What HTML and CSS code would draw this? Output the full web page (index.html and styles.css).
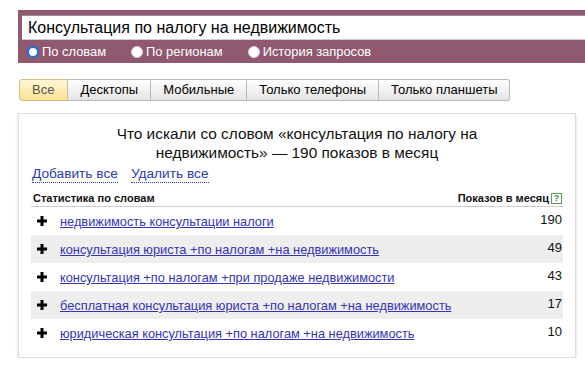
FILE: index.html
```html
<!DOCTYPE html>
<html lang="ru">
<head>
<meta charset="utf-8">
<link rel="stylesheet" href="styles.css">
</head>
<body>
<div class="search">
  <div class="input">Консультация по налогу на недвижимость</div>
  <div class="radios">
    <span class="radio"><span class="circle checked"></span>По словам</span>
    <span class="radio"><span class="circle"></span>По регионам</span>
    <span class="radio"><span class="circle"></span>История запросов</span>
  </div>
</div>
<div class="tabs">
  <span class="tab active">Все</span>
  <span class="tab">Десктопы</span>
  <span class="tab">Мобильные</span>
  <span class="tab">Только телефоны</span>
  <span class="tab">Только планшеты</span>
</div>
<div class="card">
  <div class="title">Что искали со словом «консультация по налогу на<br>недвижимость» — 190 показов в месяц</div>
  <div class="actions"><a class="dlink">Добавить все</a><a class="dlink">Удалить все</a></div>
  <div class="list">
    <div class="head">
      <span>Статистика по словам</span>
      <span class="head-right">Показов в месяц<span class="help">?</span></span>
    </div>
    <div class="row">
      <svg class="plus" width="10" height="10" viewBox="0 0 10 10"><rect x="0" y="3.5" width="10" height="3"/><rect x="3.5" y="0" width="3" height="10"/></svg>
      <a class="phrase">недвижимость консультации налоги</a>
      <span class="num">190</span>
    </div>
    <div class="row alt">
      <svg class="plus" width="10" height="10" viewBox="0 0 10 10"><rect x="0" y="3.5" width="10" height="3"/><rect x="3.5" y="0" width="3" height="10"/></svg>
      <a class="phrase">консультация юриста +по налогам +на недвижимость</a>
      <span class="num">49</span>
    </div>
    <div class="row">
      <svg class="plus" width="10" height="10" viewBox="0 0 10 10"><rect x="0" y="3.5" width="10" height="3"/><rect x="3.5" y="0" width="3" height="10"/></svg>
      <a class="phrase">консультация +по налогам +при продаже недвижимости</a>
      <span class="num">43</span>
    </div>
    <div class="row alt">
      <svg class="plus" width="10" height="10" viewBox="0 0 10 10"><rect x="0" y="3.5" width="10" height="3"/><rect x="3.5" y="0" width="3" height="10"/></svg>
      <a class="phrase">бесплатная консультация юриста +по налогам +на недвижимость</a>
      <span class="num">17</span>
    </div>
    <div class="row">
      <svg class="plus" width="10" height="10" viewBox="0 0 10 10"><rect x="0" y="3.5" width="10" height="3"/><rect x="3.5" y="0" width="3" height="10"/></svg>
      <a class="phrase">юридическая консультация +по налогам +на недвижимость</a>
      <span class="num">10</span>
    </div>
  </div>
</div>
</body>
</html>
```
FILE: styles.css
```css
* { box-sizing: border-box; }
body {
  margin: 0;
  font-family: "Liberation Sans", Arial, sans-serif;
  color: #000;
  background: #fff;
  width: 585px;
  overflow: hidden;
}
.search {
  margin: 10px 0 0 18px;
  padding: 5px 0 0 4px;
  height: 53px;
  background: #91596f;
}
.input {
  height: 25px;
  background: #fff;
  border-top: 1px solid #a28893;
  border-bottom: 1px solid #cfcfcf;
  padding-left: 6px;
  font-size: 16px;
  line-height: 23px;
  white-space: nowrap;
}
.radios {
  display: flex;
  align-items: center;
  height: 23px;
  padding-left: 5px;
  gap: 25px;
}
.radio {
  display: flex;
  align-items: center;
  gap: 3px;
  color: #fff;
  font-size: 12.9px;
  line-height: 15px;
}
.circle {
  width: 12px;
  height: 12px;
  border-radius: 50%;
  background: #fff;
  border: 1px solid #d8d0d4;
}
.circle.checked {
  border: 2px solid #1a6fe3;
}
.tabs {
  display: flex;
  margin: 16px 0 0 19px;
}
.tab {
  height: 22px;
  line-height: 20px;
  padding: 0 12px;
  font-size: 13px;
  border: 1px solid #b9b9b9;
  border-left: none;
  background: linear-gradient(#ffffff, #e4e4e4);
  white-space: nowrap;
}
.tab:last-child { border-radius: 0 3px 3px 0; }
.tab.active {
  border: 1px solid #d2be88;
  border-radius: 3px 0 0 3px;
  background: linear-gradient(#fff7d6, #fbe193);
  color: #555;
  padding: 0 13px 0 12px;
}
.card {
  margin: 12px 0 0 18px;
  width: 558px;
  border: 1px solid #dcdcdc;
  box-shadow: 0 2px 3px rgba(0,0,0,0.16);
  padding: 10px 12px 10px 12px;
}
.title {
  text-align: center;
  font-size: 15.4px;
  line-height: 19px;
  color: #111;
}
.actions {
  margin-top: 4px;
  display: flex;
  gap: 13px;
  padding-left: 1px;
  font-size: 13.7px;
  line-height: 16px;
}
.dlink {
  color: #2b3cae;
  border-bottom: 1px dotted #2b3cae;
}
.head {
  margin-top: 9px;
  display: flex;
  justify-content: space-between;
  font-size: 11px;
  font-weight: bold;
  line-height: 13px;
  padding: 0 1px 1px 2px;
  border-bottom: 1px solid #cdcdcd;
  color: #111;
}
.head-right {
  display: flex;
  align-items: center;
}
.help {
  width: 11px;
  height: 11px;
  margin-left: 2px;
  border: 1px solid #5c9b5c;
  color: #3f8a3f;
  font-size: 9px;
  line-height: 9px;
  text-align: center;
  font-weight: bold;
}
.row {
  display: flex;
  align-items: flex-start;
  height: 28px;
}
.row.alt { background: #eeeeee; }
.plus {
  margin: 9px 0 0 6px;
  flex: none;
  fill: #000;
}
.phrase {
  margin-left: 13px;
  padding-top: 7px;
  font-size: 12.8px;
  line-height: 15px;
  color: #3434b4;
  text-decoration: underline;
  white-space: nowrap;
}
.num {
  margin-left: auto;
  padding: 5px 1px 0 0;
  font-size: 13px;
  line-height: 15px;
  color: #111;
}
```
